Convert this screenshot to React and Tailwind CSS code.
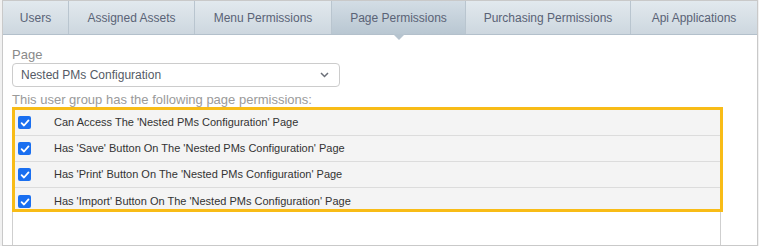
import React from "react";

const tabs = [
  { label: "Users", w: "w-[66px]" },
  { label: "Assigned Assets", w: "w-[126px]" },
  { label: "Menu Permissions", w: "w-[137px]" },
  { label: "Page Permissions", w: "w-[134px]", active: true },
  { label: "Purchasing Permissions", w: "w-[165px]" },
  { label: "Api Applications", w: "w-[126px]", last: true },
];

const rows = [
  "Can Access The 'Nested PMs Configuration' Page",
  "Has 'Save' Button On The 'Nested PMs Configuration' Page",
  "Has 'Print' Button On The 'Nested PMs Configuration' Page",
  "Has 'Import' Button On The 'Nested PMs Configuration' Page",
];

function Check() {
  return (
    <div className="w-[13px] h-[13px] rounded-[2px] bg-[#1a6ff0] flex items-center justify-center shrink-0">
      <svg width="10" height="10" viewBox="0 0 10 10">
        <path d="M1.6 5.2 L4 7.5 L8.5 2.4" fill="none" stroke="#fff" strokeWidth="1.8" strokeLinecap="round" strokeLinejoin="round" />
      </svg>
    </div>
  );
}

export default function App() {
  return (
    <div className="w-[759px] h-[246px] bg-[#f1f1f1] overflow-hidden font-['Liberation_Sans',Arial,sans-serif]">
      <div className="ml-[2px] w-[756px] h-[246px] bg-white border border-[#c9c9c9] flex flex-col overflow-hidden">
        <div className="flex h-[34px] border-b border-[#b3c0cb] shrink-0">
          {tabs.map((t) => (
            <div
              key={t.label}
              className={`relative ${t.w} h-full flex items-center justify-center text-[12px] text-[#5a6376] ${
                t.last ? "" : "border-r border-[#b9c5cf]"
              } ${
                t.active
                  ? "bg-gradient-to-b from-[#d3dde5] to-[#b9c7d2]"
                  : "bg-gradient-to-b from-[#e2e9ee] to-[#cdd7df]"
              }`}
            >
              {t.label}
              {t.active && (
                <div className="absolute left-1/2 -translate-x-1/2 top-full w-0 h-0 border-l-[6px] border-r-[6px] border-t-[6px] border-l-transparent border-r-transparent border-t-[#b6c4cf]" />
              )}
            </div>
          ))}
        </div>
        <div className="pl-[9px] flex flex-col flex-1">
          <div className="mt-[12px] text-[13px] leading-[15px] text-[#8a8a8a]">Page</div>
          <div className="mt-[1px] w-[328px] h-[24px] border border-[#cccccc] rounded-[4px] flex items-center justify-between pl-[8px] pr-[10px]">
            <span className="text-[12px] text-[#555b66]">Nested PMs Configuration</span>
            <svg width="9" height="6" viewBox="0 0 9 6">
              <path d="M1 1 L4.5 4.5 L8 1" fill="none" stroke="#6b6f78" strokeWidth="1.5" />
            </svg>
          </div>
          <div className="mt-[6px] text-[13px] leading-[14px] text-[#9a9a9a]">
            This user group has the following page permissions:
          </div>
          <div className="w-[709px] flex-1 border-l border-r border-[#cfcfcf]">
            <div className="w-[711px] -ml-[1px] border-[3px] border-[#f8bc17] bg-[#f4f4f4]">
              {rows.map((r, i) => (
                <div
                  key={r}
                  className={`flex items-center pl-[3px] ${
                    i < 3 ? "h-[26px] border-b border-[#dcdcdc]" : "h-[21px] items-start pt-[7px]"
                  }`}
                >
                  <Check />
                  <span className="ml-[23px] text-[11px] leading-[13px] text-[#333]">{r}</span>
                </div>
              ))}
            </div>
          </div>
        </div>
      </div>
    </div>
  );
}
